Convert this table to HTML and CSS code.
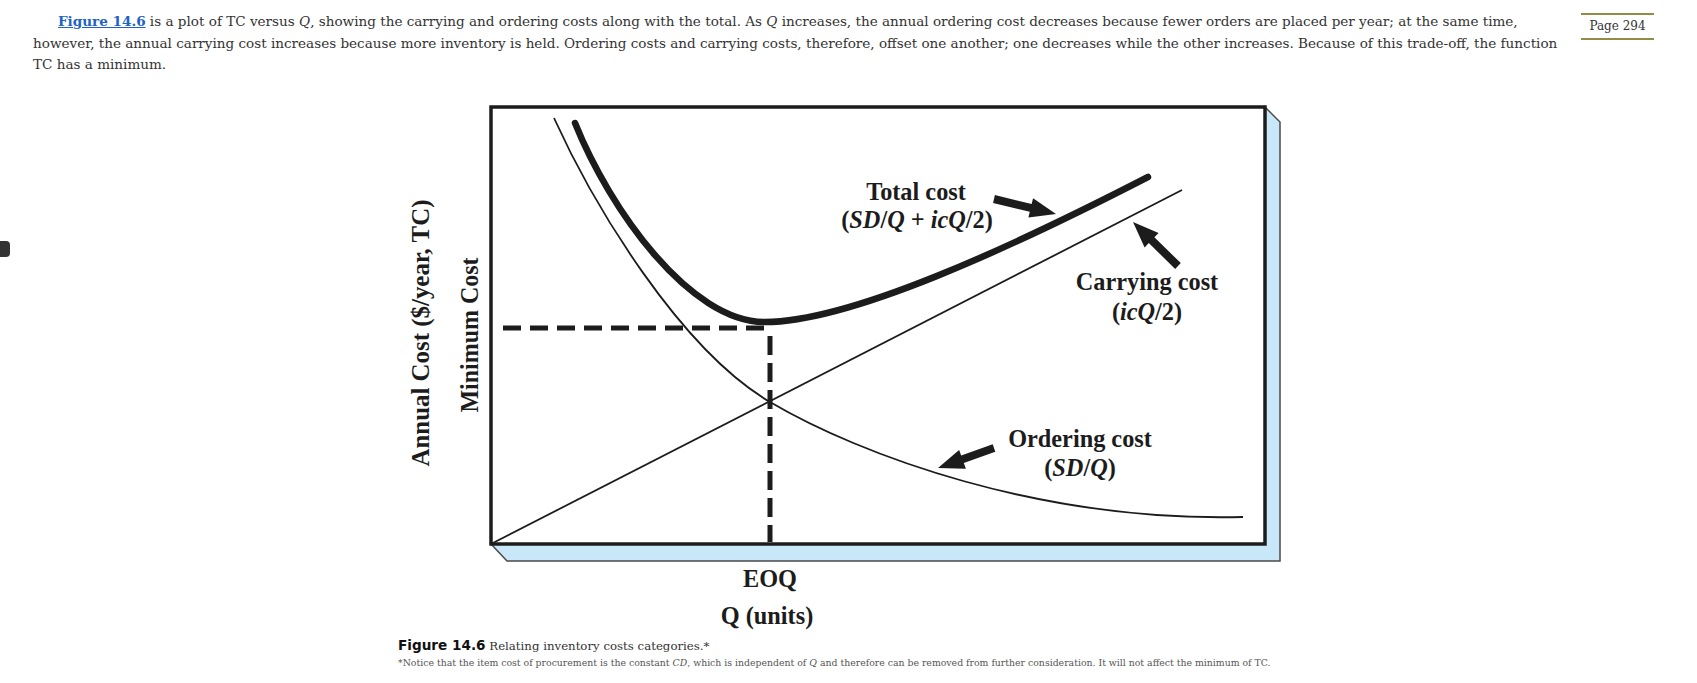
FILE: index.html
```html
<!DOCTYPE html>
<html lang="en">
<head>
<meta charset="utf-8">
<title>Figure 14.6</title>
<link rel="stylesheet" href="styles.css">
</head>
<body>
<div class="tab"></div>
<main class="content">
  <div class="top">
    <p class="para"><a class="figlink" href="#fig">Figure 14.6</a> is a plot of TC versus <i>Q</i>, showing the carrying and ordering costs along with the total. As <i>Q</i> increases, the annual ordering cost decreases because fewer orders are placed per year; at the same time, however, the annual carrying cost increases because more inventory is held. Ordering costs and carrying costs, therefore, offset one another; one decreases while the other increases. Because of this trade-off, the function TC has a minimum.</p>
    <aside class="pagenum">Page 294</aside>
  </div>
  <figure class="fig" id="fig">
    <svg class="chart" viewBox="370 88 920 542" width="920" height="542" xmlns="http://www.w3.org/2000/svg">
      <polygon points="1265,107 1280,122 1280,561 507,561 491,544 1265,544" fill="#c8e7f9" stroke="#4a4a4a" stroke-width="1.5" stroke-linejoin="miter"/>
      <rect x="491" y="107" width="774" height="437" fill="#ffffff" stroke="#1c1c1c" stroke-width="3.5"/>
      <!-- carrying cost line -->
      <line x1="491" y1="544" x2="1182" y2="190" stroke="#1c1c1c" stroke-width="1.8"/>
      <!-- ordering cost curve -->
      <path d="M554,118 C594,206 680,349 770,402 C860,455 1040,522 1243,517" fill="none" stroke="#1c1c1c" stroke-width="1.8"/>
      <!-- total cost curve -->
      <path d="M575,123 C610,210 690,322 765,322 C850,322 1010,248 1148,177" fill="none" stroke="#1c1c1c" stroke-width="6.5" stroke-linecap="round"/>
      <!-- dashed guides -->
      <line x1="503" y1="328" x2="772" y2="328" stroke="#1c1c1c" stroke-width="5" stroke-dasharray="18 9"/>
      <line x1="770" y1="336" x2="770" y2="542" stroke="#1c1c1c" stroke-width="5" stroke-dasharray="19 8"/>
      <!-- arrows -->
      <polygon points="994.9,195.1 1031.6,204.0 1033.1,198.2 1056,214 1028.4,217.6 1029.8,211.8 993.1,202.9" fill="#1c1c1c"/>
      <polygon points="1180.8,263.1 1154.4,237.3 1158.6,233.1 1133,222 1144.6,247.4 1148.8,243.1 1175.2,268.9" fill="#1c1c1c"/>
      <polygon points="992.7,444.2 961.2,455.5 959.1,449.9 938,468 965.9,468.7 963.8,463.1 995.3,451.8" fill="#1c1c1c"/>
      <!-- labels -->
      <g class="lbl">
        <text x="916" y="200" text-anchor="middle">Total cost</text>
        <text x="917" y="228" text-anchor="middle">(<tspan class="it">SD</tspan>/<tspan class="it">Q</tspan> + <tspan class="it">icQ</tspan>/2)</text>
        <text x="1147" y="290" text-anchor="middle">Carrying cost</text>
        <text x="1147" y="320" text-anchor="middle">(<tspan class="it">icQ</tspan>/2)</text>
        <text x="1080" y="447" text-anchor="middle">Ordering cost</text>
        <text x="1080" y="476" text-anchor="middle">(<tspan class="it">SD</tspan>/<tspan class="it">Q</tspan>)</text>
        <text x="770" y="587" text-anchor="middle">EOQ</text>
        <text x="767" y="624" text-anchor="middle">Q (units)</text>
        <text x="0" y="0" text-anchor="middle" textLength="267" lengthAdjust="spacingAndGlyphs" transform="translate(429,333) rotate(-90)">Annual Cost ($/year, TC)</text>
        <text x="0" y="0" text-anchor="middle" textLength="155" lengthAdjust="spacingAndGlyphs" transform="translate(478,335) rotate(-90)">Minimum Cost</text>
      </g>
    </svg>
    <figcaption class="cap"><span class="cap-label">Figure 14.6</span> Relating inventory costs categories.*</figcaption>
    <p class="foot">*Notice that the item cost of procurement is the constant <i>CD</i>, which is independent of <i>Q</i> and therefore can be removed from further consideration. It will not affect the minimum of TC.</p>
  </figure>
</main>
</body>
</html>
```

FILE: styles.css
```css
html, body {
  margin: 0;
  padding: 0;
  background: #ffffff;
}

body {
  font-family: "DejaVu Serif", "Liberation Serif", serif;
  color: #333333;
  width: 1697px;
  height: 683px;
  overflow: hidden;
  position: relative;
}

.tab {
  position: absolute;
  left: 0;
  top: 241px;
  width: 10px;
  height: 16px;
  background: #333333;
  border-radius: 0 4px 4px 0;
}

.content {
  padding-left: 33px;
  padding-right: 43px;
}

.top {
  display: flex;
  align-items: flex-start;
  gap: 1px;
}

.para {
  flex: 1;
  margin: 0;
  padding-top: 11px;
  font-size: 13.55px;
  line-height: 21.5px;
  text-indent: 25px;
}

.figlink {
  color: #1e63c6;
  font-weight: bold;
  text-decoration: underline;
}

.pagenum {
  flex: none;
  width: 73px;
  margin-top: 13px;
  border-top: 2px solid #938c47;
  border-bottom: 2px solid #938c47;
  box-sizing: border-box;
  height: 27px;
  font-size: 12px;
  line-height: 23px;
  text-align: center;
  color: #333333;
}

.fig {
  margin: 12px 0 0 337px;
  padding: 0;
}

.chart {
  display: block;
}

.lbl text {
  font-family: "Liberation Serif", "Times New Roman", serif;
  font-weight: bold;
  font-size: 24.3px;
  fill: #1c1c1c;
}

.lbl .it {
  font-style: italic;
}

.cap {
  margin: 6px 0 0 28px;
  font-size: 11.75px;
  line-height: 18px;
  color: #333333;
}

.cap-label {
  font-family: "DejaVu Sans", "Liberation Sans", sans-serif;
  font-weight: bold;
  font-size: 13.6px;
  color: #111111;
}

.foot {
  margin: 1px 0 0 28px;
  font-size: 9.33px;
  line-height: 13px;
  color: #555555;
}
```
